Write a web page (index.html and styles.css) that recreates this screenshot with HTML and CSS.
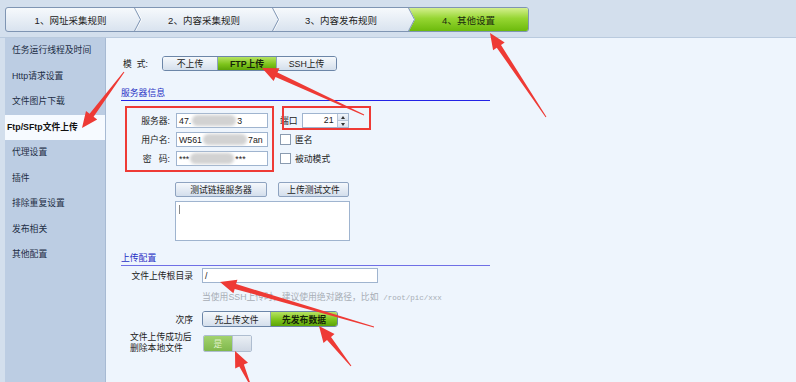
FILE: index.html
```html
<!DOCTYPE html>
<html>
<head>
    <title>其他设置 - Ftp/SFtp文件上传</title>
    <link rel="stylesheet" href="styles.css">
</head>
<body>
    <div class="topbar">
        <div class="steps">
            <div class="step s1">1、网址采集规则
                <svg class="chev" width="9" height="23"><polyline points="1.5,0 7.5,11.5 1.5,23" stroke="#ffffff" stroke-opacity="0.8" fill="none"/><polyline points="0.5,0 6.5,11.5 0.5,23" stroke="#7f95b3" fill="none"/></svg>
            </div>
            <div class="step s2">2、内容采集规则
                <svg class="chev" width="9" height="23"><polyline points="1.5,0 7.5,11.5 1.5,23" stroke="#ffffff" stroke-opacity="0.8" fill="none"/><polyline points="0.5,0 6.5,11.5 0.5,23" stroke="#7f95b3" fill="none"/></svg>
            </div>
            <div class="step s3">3、内容发布规则
                <svg class="chev" width="9" height="23"><polyline points="0.5,0 6.5,11.5 0.5,23" stroke="#7f95b3" fill="none"/></svg>
            </div>
            <div class="step s4 on">4、其他设置</div>
        </div>
    </div>

    <div class="wrap">
        <div class="side">
            <div>任务运行线程及时间</div>
            <div>Http请求设置</div>
            <div>文件图片下载</div>
            <div class="on">Ftp/SFtp文件上传</div>
            <div>代理设置</div>
            <div>插件</div>
            <div>排除重复设置</div>
            <div>发布相关</div>
            <div>其他配置</div>
        </div>

        <div class="main">
            <div class="mode">
                <span class="lbl">模&nbsp;&nbsp;式:</span>
                <div class="seg">
                    <span class="w1">不上传</span>
                    <span class="w2 on">FTP上传</span>
                    <span class="w3">SSH上传</span>
                </div>
            </div>

            <div class="sec dark">服务器信息</div>

            <div class="srv">
                <span class="lbl">服务器:</span>
                <div class="field">47.<i class="blob"></i>3</div>
                <div class="opt">端口
                    <div class="spin">
                        <span class="num">21</span>
                        <span class="arr"><b class="up"></b><b class="dn"></b></span>
                    </div>
                </div>

                <span class="lbl">用户名:</span>
                <div class="field">W561<i class="blob"></i>7an</div>
                <div class="opt"><span class="cb"></span>匿名</div>

                <span class="lbl">密&nbsp;&nbsp;&nbsp;码:</span>
                <div class="field">***<i class="blob"></i>***</div>
                <div class="opt"><span class="cb"></span>被动模式</div>
            </div>

            <div class="btns">
                <div class="btn b1">测试链接服务器</div>
                <div class="btn b2">上传测试文件</div>
            </div>
            <div class="log"><span class="caret"></span></div>

            <div class="sec light">上传配置</div>

            <div class="row r1">
                <span class="lbl">文件上传根目录</span>
                <div class="field wide">/</div>
            </div>
            <div class="hint">当使用SSH上传时，建议使用绝对路径，比如&nbsp;&nbsp;<span class="mono">/root/pic/xxx</span></div>

            <div class="row r2">
                <span class="lbl">次序</span>
                <div class="seg">
                    <span class="w4">先上传文件</span>
                    <span class="w5 on">先发布数据</span>
                </div>
            </div>

            <div class="row r3">
                <span class="lbl two">文件上传成功后<br>删除本地文件</span>
                <div class="toggle">
                    <span class="yes">是</span>
                    <span class="no"></span>
                </div>
            </div>
        </div>
    </div>

    <!-- annotation marks drawn over the screenshot -->
    <svg class="marks" width="796" height="382">
        <g fill="none" stroke="#ee3a35" stroke-width="2">
            <rect x="126" y="107" width="147" height="64"/>
            <rect x="283" y="107" width="87" height="22"/>
        </g>
        <g fill="#ee3a35">
            <polygon points="490,33 504.7,42.4 501,44.9 546.4,116.7 545.6,117.3 496.8,47.7 493.1,50.2"/>
            <polygon points="82,128 86,111 89.6,113.7 123.6,71.7 124.4,72.3 93.6,116.7 97.2,119.4"/>
            <polygon points="262,68 279.4,68.3 277.5,72.4 364.2,114.5 363.8,115.5 275.5,77 273.6,81.1"/>
            <polygon points="220,282 237.4,279.8 236.1,284.1 374.1,326.5 373.9,327.5 234.7,288.9 233.4,293.2"/>
            <polygon points="319,326 334.5,334.1 331,336.9 351.4,365.7 350.6,366.3 327,340.1 323.5,342.9"/>
            <polygon points="235,351 248,362.7 243.9,364.6 249.9,382 248.1,382 239.3,366.6 235.2,368.5"/>
        </g>
    </svg>
</body>
</html>
```

FILE: styles.css
```css
body {
    margin: 0;
    width: 796px;
    height: 382px;
    overflow: hidden;
    position: relative;
    background: #d3dfed;
    font-family: "Liberation Sans", "Noto Sans CJK SC", sans-serif;
    font-size: 8.8px;
    color: #1b1b1b;
}

/* top step bar */
.topbar {
    height: 30px;
    padding: 7px 0 0 5px;
    border-bottom: 1px solid #b9cade;
}

.steps {
    display: flex;
    width: 524px;
    height: 25px;
    box-sizing: border-box;
    border: 1px solid #7f95b3;
    border-radius: 3px;
    background: linear-gradient(#f6f9fc, #d9e3ef);
    overflow: hidden;
}

.step {
    position: relative;
    display: flex;
    align-items: center;
    justify-content: center;
    font-size: 9.5px;
    color: #222;
}

.step .chev {
    position: absolute;
    top: 0;
    left: calc(100% - 1px);
    z-index: 1;
}

.s1 { width: 129px; }
.s2 { width: 138px; }
.s3 { width: 136px; }
.s4 { width: 119px; }

.step.on {
    background: linear-gradient(#d4f08e, #96d632 45%, #6cba0c);
    clip-path: polygon(0 0, 100% 0, 100% 100%, 0 100%, 6px 50%);
    color: #1a2a10;
}

/* sidebar + main */
.wrap {
    display: flex;
    height: 344px;
}

.side {
    width: 100px;
    margin-left: 5px;
    background: #bccde3;
    border-right: 1px solid #a7bad3;
}

.side div {
    height: 25.5px;
    line-height: 25.5px;
    padding-left: 7px;
    color: #1d2d45;
    white-space: nowrap;
}

.side div.on {
    background: #f6faff;
    font-weight: bold;
    padding-left: 2px;
    color: #111;
}

.main {
    flex: 1;
    background: #eef5fd;
    padding-left: 15px;
}

.mode {
    display: flex;
    align-items: center;
    height: 15px;
    margin-top: 18px;
}

.mode .lbl {
    width: 39px;
    padding-left: 2px;
}

.seg {
    display: flex;
    height: 16px;
    box-sizing: border-box;
    border: 1px solid #6c86a8;
    border-radius: 3px;
    overflow: hidden;
}

.mode .seg {
    height: 15px;
}

.seg span {
    display: flex;
    align-items: center;
    justify-content: center;
    background: linear-gradient(#f6f9fc, #d4dfec);
    border-left: 1px solid #8ca2bf;
    color: #222;
}

.seg span:first-child {
    border-left: 0;
}

.seg span.on {
    background: linear-gradient(#b6e362, #7ec41c 55%, #5ca408);
    font-weight: bold;
    color: #15230a;
}

.w1 { width: 54px; }
.w2 { width: 58px; }
.w3 { width: 59px; }
.w4 { width: 67px; }
.w5 { width: 66px; }

.sec {
    width: 369px;
    line-height: 12px;
    padding-bottom: 1px;
    color: #1f30c4;
}

.sec.dark {
    margin-top: 16px;
    border-bottom: 1px solid #2323e6;
}

.sec.light {
    margin-top: 11px;
    border-bottom: 1px solid #6f6fe6;
}

/* server info grid */
.srv {
    display: grid;
    grid-template-columns: 55px 92px auto;
    grid-auto-rows: 15px;
    row-gap: 4px;
    align-items: center;
    margin-top: 12px;
}

.srv .lbl {
    text-align: right;
    padding-right: 6px;
    color: #222;
}

.field {
    height: 15px;
    box-sizing: border-box;
    border: 1px solid #9fb4cf;
    background: #fff;
    display: flex;
    align-items: center;
    padding-left: 2px;
    color: #222;
    white-space: nowrap;
}

.blob {
    display: inline-block;
    width: 44px;
    height: 11px;
    margin: 0 1px;
    border-radius: 6px;
    background: #d2d2d2;
    filter: blur(1.5px);
}

.opt {
    display: flex;
    align-items: center;
    gap: 4px;
    margin-left: 12px;
    color: #222;
}

.spin {
    display: flex;
    width: 47px;
    height: 15px;
    box-sizing: border-box;
    border: 1px solid #9fb4cf;
    background: #fff;
}

.spin .num {
    flex: 1;
    text-align: right;
    padding-right: 3px;
    line-height: 13px;
}

.spin .arr {
    width: 10px;
    display: flex;
    flex-direction: column;
    border-left: 1px solid #b5c4d6;
}

.spin .arr b {
    flex: 1;
    display: flex;
    align-items: center;
    justify-content: center;
    background: linear-gradient(#f2f6fb, #d8e2ee);
}

.spin .arr b.up {
    border-bottom: 1px solid #b5c4d6;
}

.spin .arr b::after {
    content: "";
    border-left: 2.5px solid transparent;
    border-right: 2.5px solid transparent;
}

.spin .arr b.up::after {
    border-bottom: 3px solid #333;
}

.spin .arr b.dn::after {
    border-top: 3px solid #333;
}

.cb {
    width: 9px;
    height: 9px;
    border: 1px solid #8a9bb0;
    background: #fff;
}

.btns {
    display: flex;
    gap: 11px;
    margin: 16px 0 0 54px;
}

.btn {
    height: 15px;
    box-sizing: border-box;
    border: 1px solid #8ea3c0;
    border-radius: 2px;
    background: linear-gradient(#f5f8fc, #d3deec);
    display: flex;
    align-items: center;
    justify-content: center;
    color: #222;
}

.b1 { width: 92px; }
.b2 { width: 71px; }

.log {
    width: 175px;
    height: 40px;
    box-sizing: border-box;
    margin: 4px 0 0 54px;
    border: 1px solid #9fb4cf;
    background: #fff;
    padding: 3px 0 0 3px;
}

.caret {
    display: block;
    width: 1px;
    height: 9px;
    background: #888;
}

/* upload config rows */
.row {
    display: flex;
    align-items: center;
}

.row .lbl {
    width: 72px;
    padding-right: 9px;
    text-align: right;
    color: #222;
}

.r1 { margin-top: 2px; }
.r2 { margin-top: 7px; }
.r3 { margin-top: 5px; }

.field.wide {
    width: 176px;
}

.hint {
    margin: 8px 0 0 81px;
    line-height: 12px;
    color: #a7adb5;
}

.mono {
    font-family: "Liberation Mono", monospace;
    font-size: 7.5px;
}

.row .lbl.two {
    padding: 0 0 0 9px;
    text-align: left;
    line-height: 11px;
}

.toggle {
    display: flex;
    width: 49px;
    height: 17px;
    box-sizing: border-box;
    margin-left: 1px;
    border: 1px solid #aebdd0;
    border-radius: 2px;
    overflow: hidden;
}

.toggle .yes {
    width: 28px;
    display: flex;
    align-items: center;
    justify-content: center;
    background: linear-gradient(#a2d26e, #80b84c);
    color: #dff0c8;
}

.toggle .no {
    flex: 1;
    border-left: 1px solid #b4c2d3;
    background: linear-gradient(#eaeff5, #cfd8e4);
}

.marks {
    position: absolute;
    left: 0;
    top: 0;
    pointer-events: none;
}
```
